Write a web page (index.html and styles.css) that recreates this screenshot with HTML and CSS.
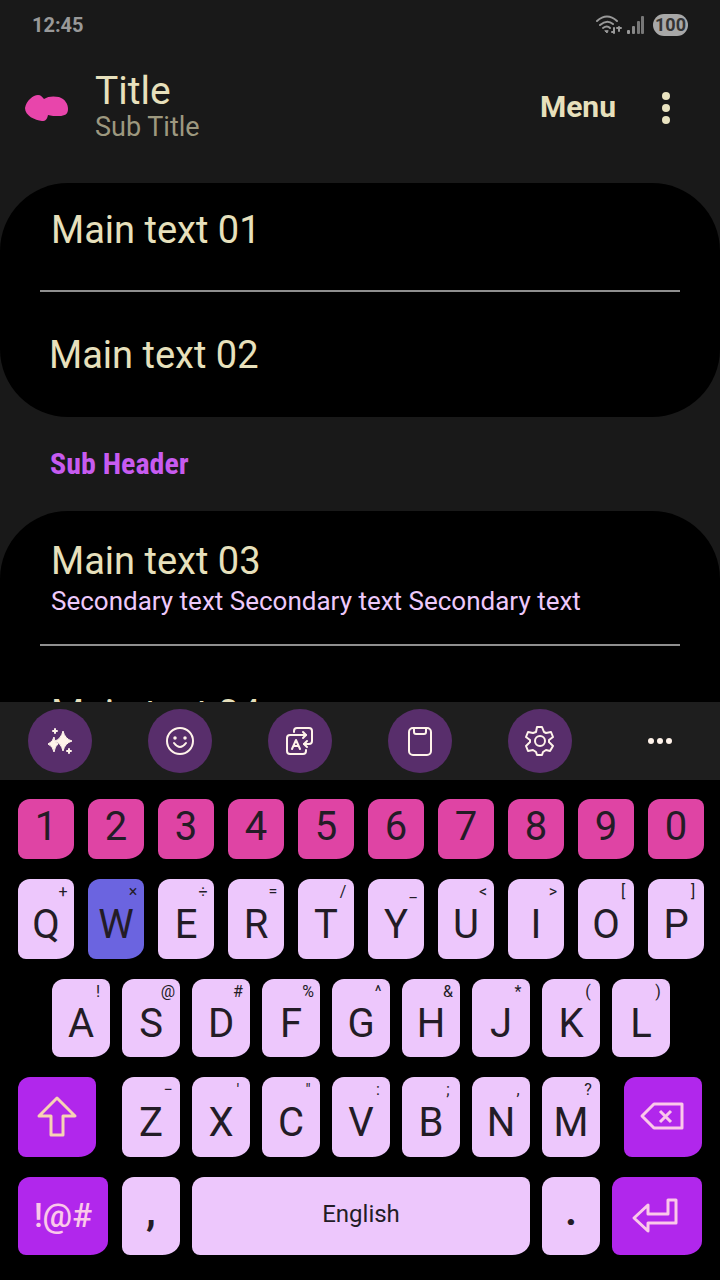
FILE: index.html
```html
<!DOCTYPE html>
<html lang="en">
<head>
    <meta charset="UTF-8">
    <meta name="viewport" content="width=device-width, initial-scale=1.0">
    <title>Theme Preview</title>
    <link rel="stylesheet" href="styles.css">
</head>
<body>
    <main class="app">
        <div class="status-bar">
            <span class="clock">12:45</span>
            <div class="status-icons">
                <svg viewBox="0 0 26 20" width="26" height="20" fill="none" stroke="#999" stroke-width="2" stroke-linecap="round">
                    <path d="M2 6Q12 -3 22 6M5 10Q12 4 18 9M8 13Q12 10 15 13"/>
                    <path d="M10 16L12 18L13 16Z" fill="#999" stroke-width="1"/>
                    <path d="M19 13V18M17 17H19M24 12V16M22 13H26"/>
                </svg>
                <svg viewBox="0 0 18 20" width="18" height="20" fill="#999">
                    <rect x="0" y="15" width="3" height="4" rx="1"/>
                    <rect x="5" y="11" width="3" height="8" rx="1" fill="#888"/>
                    <rect x="10" y="6" width="3" height="13" rx="1" fill="#777"/>
                    <rect x="14" y="1" width="3" height="18" rx="1" fill="#777"/>
                </svg>
                <span class="battery">100</span>
            </div>
        </div>

        <header class="header">
            <svg class="logo" viewBox="0 0 44 28" width="44" height="28">
                <path d="M0 15C1 8 8 2 13 2C16 2 17 4 19 6C23 3 29 3 34 4C40 6 43 11 43 16C43 21 40 23 34 23C30 23 26 23 23 22C22 26 21 28 17 28C10 27 0 23 0 15Z" fill="#e845ab"/>
            </svg>
            <div class="titles">
                <h1>Title</h1>
                <p>Sub Title</p>
            </div>
            <button class="menu-btn">Menu</button>
            <button class="more-btn" aria-label="More options">
                <svg viewBox="0 0 8 32" width="8" height="32" fill="#e9e3c0">
                    <circle cx="4" cy="5" r="4"/>
                    <circle cx="4" cy="17" r="4"/>
                    <circle cx="4" cy="29" r="4"/>
                </svg>
            </button>
        </header>

        <section class="card">
            <div class="item first">Main text 01</div>
            <hr>
            <div class="item">Main text 02</div>
        </section>

        <h2 class="sub-header">Sub Header</h2>

        <section class="card">
            <div class="item double">
                Main text 03
                <p class="secondary">Secondary text Secondary text Secondary text</p>
            </div>
            <hr>
            <div class="item tall">Main text 04</div>
        </section>
    </main>

    <div class="toolbar">
        <button class="tool" aria-label="Assist">
            <svg viewBox="0 0 32 32" fill="#fff3ea">
                <path d="M19 6Q21 14 28 16Q21 18 19 26Q17 18 11 16Q17 14 19 6Z" stroke="#fff3ea" stroke-linejoin="round"/>
                <path d="M10 12Q10 17 14 19Q11 21 10 27Q9 21 4 19Q9 17 10 12Z" stroke="#fff3ea" stroke-linejoin="round"/>
                <path d="M11 4V8M9 6H13M25 24V28M23 26H27" stroke="#fff3ea" stroke-width="2" stroke-linecap="round"/>
            </svg>
        </button>
        <button class="tool" aria-label="Emoji">
            <svg viewBox="0 0 32 32" fill="none" stroke="#fff3ea" stroke-width="2" stroke-linecap="round">
                <circle cx="16" cy="16" r="13"/>
                <path d="M10 18Q16 26 22 18"/>
                <circle cx="11" cy="13" r="1" fill="#fff3ea" stroke-width="1.5"/>
                <circle cx="21" cy="13" r="1" fill="#fff3ea" stroke-width="1.5"/>
            </svg>
        </button>
        <button class="tool" aria-label="Translate">
            <svg viewBox="0 0 32 32" fill="none" stroke="#fff3ea" stroke-width="2" stroke-linecap="round" stroke-linejoin="round">
                <path d="M10 7V6Q10 3 13 3H25Q28 3 28 6V16Q28 19 25 19H20"/>
                <path d="M23 16L20 19L23 22"/>
                <path d="M22 25V26Q22 29 19 29H6Q3 29 3 26V13Q3 10 6 10H22"/>
                <path d="M19 7L22 10L19 13"/>
                <path d="M8 24L12 15L16 24M10 21H14"/>
            </svg>
        </button>
        <button class="tool" aria-label="Clipboard">
            <svg viewBox="0 0 32 32" fill="none" stroke="#fff3ea" stroke-width="2" stroke-linejoin="round">
                <rect x="5" y="3" width="22" height="27" rx="4"/>
                <path d="M10 3V7Q10 9 12 9H20Q22 9 22 7V3"/>
            </svg>
        </button>
        <button class="tool" aria-label="Settings">
            <svg viewBox="0 0 32 32" fill="none" stroke="#fff3ea" stroke-width="2" stroke-linejoin="round">
                <path d="M13 2H18L20 7L22 8L27 7L29 12L25 15V17L29 21L26 26L22 25L19 27L18 30H13L12 27L9 25L4 26L2 21L6 17V15L2 12L4 7L9 8L12 7Z"/>
                <circle cx="16" cy="16" r="5"/>
            </svg>
        </button>
        <button class="tool plain" aria-label="More tools">
            <svg viewBox="0 0 32 32" fill="#fff3ea">
                <circle cx="7" cy="16" r="3"/>
                <circle cx="16" cy="16" r="3"/>
                <circle cx="25" cy="16" r="3"/>
            </svg>
        </button>
    </div>

    <div class="keyboard">
        <div class="row numbers">
            <button class="key">1</button>
            <button class="key">2</button>
            <button class="key">3</button>
            <button class="key">4</button>
            <button class="key">5</button>
            <button class="key">6</button>
            <button class="key">7</button>
            <button class="key">8</button>
            <button class="key">9</button>
            <button class="key">0</button>
        </div>
        <div class="row top">
            <button class="key">Q<span class="hint">+</span></button>
            <button class="key pressed">W<span class="hint">×</span></button>
            <button class="key">E<span class="hint">÷</span></button>
            <button class="key">R<span class="hint">=</span></button>
            <button class="key">T<span class="hint">/</span></button>
            <button class="key">Y<span class="hint">_</span></button>
            <button class="key">U<span class="hint">&lt;</span></button>
            <button class="key">I<span class="hint">&gt;</span></button>
            <button class="key">O<span class="hint">[</span></button>
            <button class="key">P<span class="hint">]</span></button>
        </div>
        <div class="row home">
            <button class="key">A<span class="hint">!</span></button>
            <button class="key">S<span class="hint">@</span></button>
            <button class="key">D<span class="hint">#</span></button>
            <button class="key">F<span class="hint">%</span></button>
            <button class="key">G<span class="hint">^</span></button>
            <button class="key">H<span class="hint">&amp;</span></button>
            <button class="key">J<span class="hint">*</span></button>
            <button class="key">K<span class="hint">(</span></button>
            <button class="key">L<span class="hint">)</span></button>
        </div>
        <div class="row bottom">
            <button class="key special shift" aria-label="Shift">
                <svg viewBox="0 0 40 40" width="40" height="40" fill="none" stroke="#f7d3b4" stroke-width="3" stroke-linejoin="round">
                    <path d="M20 1L38 19H26V38H14V19H2Z"/>
                </svg>
            </button>
            <button class="key">Z<span class="hint">−</span></button>
            <button class="key">X<span class="hint">'</span></button>
            <button class="key">C<span class="hint">"</span></button>
            <button class="key">V<span class="hint">:</span></button>
            <button class="key">B<span class="hint">;</span></button>
            <button class="key">N<span class="hint">,</span></button>
            <button class="key">M<span class="hint">?</span></button>
            <button class="key special backspace" aria-label="Backspace">
                <svg viewBox="0 0 44 28" width="44" height="28" fill="none" stroke="#fbc8ea" stroke-width="3" stroke-linejoin="round">
                    <path d="M13 1H41V25H13L1 13Z"/>
                    <path d="M19 8L30 19M30 8L19 19"/>
                </svg>
            </button>
        </div>
        <div class="row last">
            <button class="key special symbols">!@#</button>
            <button class="key punct">,</button>
            <button class="key space">English</button>
            <button class="key punct">.</button>
            <button class="key special enter" aria-label="Enter">
                <svg viewBox="0 0 48 36" width="48" height="36" fill="none" stroke="#fbc8ea" stroke-width="3" stroke-linejoin="round">
                    <path d="M1 20L15 7V16H35V2H43V25H15V33Z"/>
                </svg>
            </button>
        </div>
    </div>
</body>
</html>
```

FILE: styles.css
```css
* {
    margin: 0;
    padding: 0;
    box-sizing: border-box;
}

body {
    background-color: #000;
    color: #e7e0bc;
    font-family: Roboto, "Liberation Sans", sans-serif;
    display: flex;
    flex-direction: column;
    height: 100vh;
}

button {
    border: none;
    background: none;
    color: inherit;
    font-family: inherit;
    cursor: pointer;
}

svg {
    display: block;
    overflow: visible;
}

.app {
    flex: 1;
    min-height: 0;
    overflow: hidden;
    background-color: #191919;
}

/* Status bar */
.status-bar {
    display: flex;
    justify-content: space-between;
    align-items: center;
    height: 50px;
    padding: 0 32px;
    color: #999;
    font-size: 20px;
    font-weight: bold;
}

.status-icons {
    display: flex;
    align-items: center;
    gap: 6px;
}

.battery {
    background-color: #a8a8a8;
    color: #333;
    border-radius: 12px;
    margin-left: 2px;
    padding: 0 2px;
    font-size: 18px;
    line-height: 22px;
}

/* Header */
.header {
    display: flex;
    align-items: center;
    height: 133px;
    padding: 0 50px 20px 25px;
}

.titles {
    flex: 1;
    margin-left: 26px;
}

.titles h1 {
    font-size: 39px;
    font-weight: normal;
    line-height: 40px;
}

.titles p {
    color: #9d987f;
    font-size: 27px;
    line-height: 32px;
}

.menu-btn {
    font-size: 30px;
    font-weight: bold;
}

.more-btn {
    margin-left: 46px;
}

/* List */
.card {
    background-color: #000;
    border-radius: 68px;
    overflow: hidden;
}

.card hr {
    border: none;
    height: 2px;
    margin: 0 40px;
    background-color: #8f8f8f;
}

.item {
    padding: 40px 49px 39px;
    font-size: 38px;
    line-height: 46px;
}

.item.first {
    padding: 24px 51px 37px;
}

.item.double {
    padding: 27px 51px 26px;
}

.item.tall {
    padding: 45px 51px;
}

.secondary {
    color: #edc9fb;
    font-size: 26px;
    line-height: 34px;
}

.sub-header {
    padding: 0 50px;
    color: #c75bf0;
    font-family: "Roboto Condensed", "Liberation Sans Narrow", Roboto, sans-serif;
    font-size: 30px;
    line-height: 94px;
}

/* Toolbar */
.toolbar {
    display: flex;
    align-items: center;
    height: 78px;
    background-color: #1e1e1e;
}

.tool {
    flex: 1;
    display: flex;
    justify-content: center;
}

.tool svg {
    width: 64px;
    height: 64px;
    padding: 16px;
    border-radius: 50%;
    background-color: #582e6b;
}

.tool.plain svg {
    background: none;
}

/* Keyboard */
.keyboard {
    display: flex;
    flex-direction: column;
    gap: 20px;
    padding: 19px 0 25px;
}

.row {
    display: flex;
    gap: 12px;
    height: 78px;
    padding: 0 18px;
}

.key {
    position: relative;
    flex: 58 1 0;
    display: flex;
    justify-content: center;
    align-items: center;
    padding-top: 12px;
    background-color: #edc7fc;
    color: #231c26;
    border-radius: 12px 8px 18px 8px / 12px 8px 14px 8px;
    font-size: 40px;
    line-height: 48px;
}

.hint {
    position: absolute;
    top: 4px;
    right: 1px;
    width: 22px;
    font-size: 16px;
    line-height: 18px;
    text-align: center;
}

.numbers,
.top {
    gap: 14px;
    padding: 0 16px 0 18px;
}

.numbers {
    height: 60px;
}

.numbers .key {
    padding: 0 0 4px;
    background-color: #df44a4;
}

.top,
.bottom {
    height: 80px;
}

.key.pressed {
    background-color: #6b64e0;
}

.top .hint {
    right: 0;
}

.home {
    padding: 0 50px 0 52px;
}

.key.special {
    padding: 0;
    background-color: #b127ec;
    color: #fbc8ea;
    font-size: 33px;
    font-weight: 500;
}

.key.shift {
    flex-grow: 78;
    margin-right: 14px;
}

.key.backspace {
    flex-grow: 78;
    margin-left: 12px;
}

.key.symbols {
    flex-grow: 90;
    margin-right: 2px;
}

.key.enter {
    flex-grow: 90;
}

.key.punct {
    padding: 0 0 8px;
    font-weight: bold;
}

.key.space {
    flex-grow: 338;
    padding: 0 0 4px;
    font-size: 24px;
}

@media (max-width: 600px) {
    .row {
        gap: 6px;
        padding: 0 8px;
    }

    .home {
        padding: 0 24px;
    }

    .key {
        font-size: 28px;
    }
}
```
